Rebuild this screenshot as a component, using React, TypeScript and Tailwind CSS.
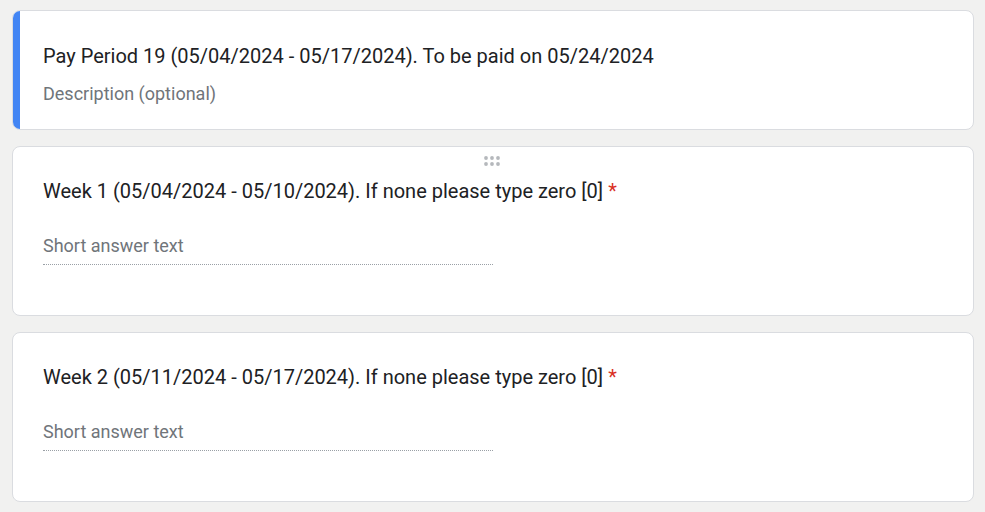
const questions = [
  { title: "Week 1 (05/04/2024 - 05/10/2024). If none please type zero [0]", drag: true },
  { title: "Week 2 (05/11/2024 - 05/17/2024). If none please type zero [0]", drag: false },
];

function DragHandle() {
  return (
    <svg width="20" height="12" viewBox="0 0 20 12" className="text-[#b5b8bc]">
      {[3, 9].map((y) =>
        [3, 9, 15].map((x) => <circle key={`${x}-${y}`} cx={x} cy={y} r="1.9" fill="currentColor" />)
      )}
    </svg>
  );
}

export default function App() {
  return (
    <div className="min-h-screen w-full bg-[#f1f1f0] px-3 pt-[10px] font-['Roboto',sans-serif] text-[#202124]">
      <div className="flex w-[962px] flex-col gap-4">
        {/* section header */}
        <div className="flex h-[120px] overflow-hidden rounded-lg border border-[#dadce0] bg-white">
          <div className="w-[7px] shrink-0 bg-[#4285f4]" />
          <div className="flex flex-col pl-[23px] pt-[31px]">
            <div className="text-[20px] leading-7">
              Pay Period 19 (05/04/2024 - 05/17/2024). To be paid on 05/24/2024
            </div>
            <div className="mt-[12px] text-[18px] leading-6 text-[#70757a]">Description (optional)</div>
          </div>
        </div>

        {questions.map((q, i) => (
          <div key={i} className="flex h-[170px] flex-col rounded-lg border border-[#dadce0] bg-white px-[30px]">
            <div className="flex h-[20px] items-end justify-center">
              {q.drag && <DragHandle />}
            </div>
            <div className="mt-[10px] flex items-start text-[20px] leading-7">
              <span>{q.title}</span>
              <span className="ml-[5px] text-[#d93025]">*</span>
            </div>
            <div className="mt-[29px] w-[450px] border-b border-dotted border-[#9aa0a6] pb-[6px] text-[18px] leading-6 text-[#70757a]">
              Short answer text
            </div>
          </div>
        ))}
      </div>
    </div>
  );
}
